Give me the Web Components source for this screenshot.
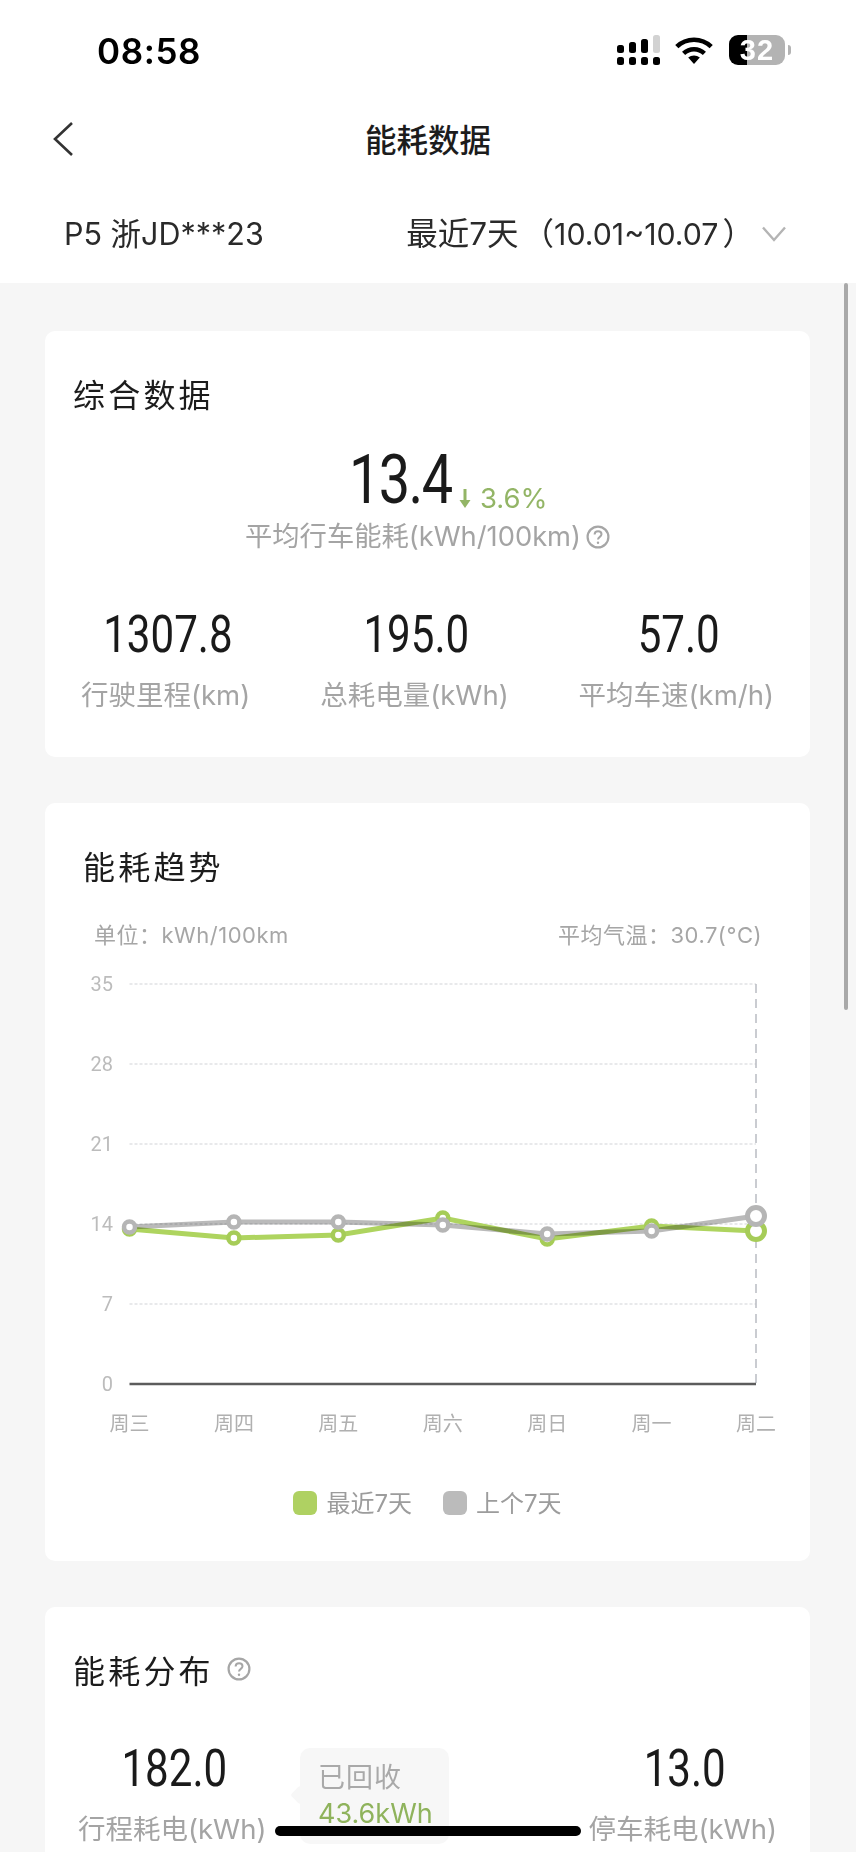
<!DOCTYPE html>
<html lang="zh-CN">
<head>
<meta charset="utf-8">
<title>能耗数据</title>
<style>
html,body{margin:0;padding:0;background:#f6f6f6}
body{font-family:"Liberation Sans","Noto Sans CJK SC",sans-serif;color:#1c1c1c}
</style>
</head>
<body>
<energy-app></energy-app>

<template id="t-app">
<style>
:host{display:block;position:relative;width:856px;height:1852px;overflow:hidden;background:#f6f6f6}
main{display:flex;flex-direction:column;gap:46px;padding:48px 46px 0 45px}
.scroll{position:absolute;left:844px;top:283px;width:4px;height:727px;background:#a9a9a9;border-radius:2px}
.home{position:absolute;left:275px;top:1826px;width:306px;height:10px;background:#000;border-radius:5px}
</style>
<status-bar></status-bar>
<nav-bar>能耗数据</nav-bar>
<filter-row></filter-row>
<main>
  <data-card heading="综合数据" pad="28" style="height:426px"><summary-panel></summary-panel></data-card>
  <data-card heading="能耗趋势" pad="38" style="height:758px"><trend-chart></trend-chart></data-card>
  <data-card heading="能耗分布" help pad="28" style="height:300px"><distribution-panel></distribution-panel></data-card>
</main>
<div class="scroll"></div>
<div class="home"></div>
</template>

<template id="t-status">
<style>
:host{display:flex;justify-content:space-between;align-items:flex-start;height:100px;background:#fff;box-sizing:border-box;padding:31px 65px 0 97px}
.time{font:600 35px/40px Inter,"Liberation Sans",sans-serif;letter-spacing:.6px;color:#000}
.icons{display:flex;align-items:flex-start;padding-top:4px}
.sig{margin-right:15px}.wifi{margin-right:16px;margin-top:2px}
.bat{position:relative;width:56px;height:30px;border-radius:9px;overflow:hidden;background:linear-gradient(90deg,#000 0 18px,#b3b3b3 18px);text-align:center;font:700 29px/31px "Liberation Sans",sans-serif;color:#fff;letter-spacing:1px;box-sizing:border-box}
.cap{width:3px;height:10px;margin:10px 0 0 3px;background:#b3b3b3;border-radius:0 3px 3px 0}
</style>
<div class="time">08:58</div>
<div class="icons">
<svg class="sig" width="43" height="30" viewBox="0 0 43 30">
  <rect x="0" y="10" width="7" height="8" rx="2.5"/><rect x="12" y="7" width="7" height="11" rx="2.5"/><rect x="24" y="4" width="7" height="14" rx="2.5"/><rect x="36" y="0" width="7" height="18" rx="2.5" fill="#d2d2d2"/>
  <rect x="0" y="22" width="7" height="8" rx="2.5"/><rect x="12" y="22" width="7" height="8" rx="2.5"/><rect x="24" y="22" width="7" height="8" rx="2.5"/><rect x="36" y="22" width="7" height="8" rx="2.5"/>
</svg>
<svg class="wifi" width="38" height="27" viewBox="0 0 38 27" fill="none" stroke="#000" stroke-width="4.6">
  <path d="M1.8 9.6C11.5 .4 26.5 .4 36.2 9.6"/><path d="M8.6 16.4C14.5 10.9 23.5 10.9 29.4 16.4"/><path d="M13.2 20.6C16.6 17.8 21.4 17.8 24.8 20.6L19 27Z" fill="#000" stroke="none"/>
</svg>
<div class="bat">32</div><div class="cap"></div>
</div>
</template>

<template id="t-nav">
<style>
:host{display:flex;align-items:center;justify-content:center;position:relative;height:78px;background:#fff}
.t{font:500 31.5px/40px "Noto Sans CJK SC",sans-serif;color:#1c1c1c;margin-top:-2px}
svg{position:absolute;left:52px;top:21px}
</style>
<svg width="22" height="36" viewBox="0 0 22 36" fill="none" stroke="#333" stroke-width="2.6"><path d="M20 2 3 18 20 34"/></svg>
<div class="t"><slot></slot></div>
</template>

<template id="t-filter">
<style>
:host{display:flex;align-items:center;justify-content:space-between;height:105px;background:#fff;box-sizing:border-box;padding:6px 70px 0 64px;font:400 30.500px/40px Inter,"Noto Sans CJK SC",sans-serif;color:#2a2a2a}
.r{display:flex;align-items:center;font-size:31.5px;white-space:pre}
.n{font-size:30.3px;margin-right:4px}
.o{margin-left:4px}
.c{margin-left:8px}
</style>
<div>P5 浙JD***23</div>
<div class="r"><span>最近7天<span class="o">（</span><span class="n">10.01~10.07</span>）</span><svg class="c" width="24" height="16" viewBox="0 0 24 16" fill="none" stroke="#b4b4b4" stroke-width="2.4"><path d="M1 1.500 12 14 23 1.500"/></svg></div>
</template>

<template id="t-card">
<style>
:host{display:block;background:#fff;border-radius:10px;box-sizing:border-box;overflow:visible}
.h{display:flex;align-items:center;padding-top:42px;font:400 32px/40px "Noto Sans CJK SC",sans-serif;letter-spacing:3.2px;color:#1c1c1c}
</style>
<div class="h" id="h"><span id="title"></span></div>
<slot></slot>
</template>

<template id="t-help">
<style>
:host{display:inline-flex;vertical-align:middle}
</style>
<svg width="24" height="24" viewBox="0 0 24 24" fill="none" stroke="#a6a6a6" stroke-width="2.2"><circle cx="12" cy="12" r="10.4"/><path d="M8.6 9.6c0-2 1.500-3.300 3.500-3.300s3.400 1.300 3.400 3c0 2.600-3.500 2.500-3.500 5.300" stroke-width="2"/><circle cx="12" cy="17.800" r="1.200" fill="#a6a6a6" stroke="none"/></svg>
</template>

<template id="t-num">
<style>
:host{display:inline-block;font-family:Roboto,sans-serif;font-weight:400;color:#1a1a1a;white-space:nowrap}
span{display:inline-block;transform:scaleX(var(--sx,.81));transform-origin:center}
</style>
<span><slot></slot></span>
</template>

<template id="t-stat">
<style>
:host{display:flex;flex-direction:column;align-items:center}
big-num{font-size:52px;line-height:50px;margin-left:4px}
.l{margin-top:17px;font:400 27.500px/36px Inter,"Noto Sans CJK SC",sans-serif;color:#a4a4a4;white-space:nowrap}
</style>
<big-num id="n"></big-num>
<div class="l"><slot></slot></div>
</template>

<template id="t-summary">
<style>
:host{display:block}
.top{display:flex;flex-direction:column;align-items:center;padding-top:32px}
.v{display:flex;align-items:flex-end;height:70px;margin-left:42px}
big-num{font-size:69px;line-height:70px;letter-spacing:-2px;--sx:.81;margin:0 -12px 0 -12px}
.d{display:flex;align-items:center;margin:0 0 3px 7px;font:400 27.500px/28px Inter,sans-serif;color:#93b566}
.d svg{margin-right:9px}
.lab{display:flex;align-items:center;gap:5px;margin-top:3px;font:400 27.300px/38px Inter,"Noto Sans CJK SC",sans-serif;color:#a4a4a4;white-space:nowrap}
.row{display:flex;justify-content:space-between;padding:0 36px;margin-top:54px}
</style>
<div class="top">
  <div class="v"><big-num>13.4</big-num><div class="d"><svg width="12" height="19" viewBox="0 0 11 19" fill="#93b566"><path d="M4 0h3v11h4l-5.500 8L0 11h4z"/></svg>3.6%</div></div>
  <div class="lab">平均行车能耗(kWh/100km)<help-icon></help-icon></div>
</div>
<div class="row">
  <stat-item value="1307.8">行驶里程(km)</stat-item>
  <stat-item value="195.0">总耗电量(kWh)</stat-item>
  <stat-item value="57.0">平均车速(km/h)</stat-item>
</div>
</template>

<template id="t-trend">
<style>
:host{display:block}
.u{display:flex;justify-content:space-between;padding:0 48px 0 49px;margin-top:34px;font:400 22px/32px Inter,"Noto Sans CJK SC",sans-serif;color:#a6a6a6;letter-spacing:.5px}
svg.c{display:block;margin-top:19.500px}
svg text{font-family:Roboto,"Noto Sans CJK SC",sans-serif}
.lg{display:flex;justify-content:center;gap:31px;margin-top:40px}
.it{display:flex;align-items:center;gap:9px;font:400 24px/25px Inter,"Noto Sans CJK SC",sans-serif;color:#9c9c9c}
.sw{width:24px;height:24px;border-radius:6px}
</style>
<div class="u"><span>单位：kWh/100km</span><span>平均气温：30.7(°C)</span></div>
<svg class="c" id="c" width="765" height="480" viewBox="45 970 765 480"></svg>
<div class="lg">
  <div class="it"><span class="sw" style="background:#afd162"></span>最近7天</div>
  <div class="it"><span class="sw" style="background:#bbb"></span>上个7天</div>
</div>
</template>

<template id="t-dist">
<style>
:host{display:block;position:relative}
.row{display:flex;justify-content:space-between;padding:0 33px;margin-top:55px}
.tip{position:absolute;left:255px;top:4px;width:149px;height:96px;box-sizing:border-box;padding:11px 0 0 18px;background:#f7f7f7;border-radius:10px}
.tip:before{content:"";position:absolute;left:-7px;top:40px;width:14px;height:14px;background:#f7f7f7;transform:rotate(45deg);border-radius:3px}
.a{position:relative;font:400 27px/34px "Noto Sans CJK SC",sans-serif;color:#a9a9a9;letter-spacing:1px}
.b{position:relative;margin-top:4px;font:400 27px/34px Inter,sans-serif;color:#8fb35c}
</style>
<div class="row">
  <stat-item value="182.0">行程耗电(kWh)</stat-item>
  <stat-item value="13.0">停车耗电(kWh)</stat-item>
</div>
<div class="tip"><div class="a">已回收</div><div class="b">43.6kWh</div></div>
</template>

<script>
function tpl(id){return document.getElementById(id).content.cloneNode(true)}
class Base extends HTMLElement{
  constructor(){super();this.attachShadow({mode:"open"}).appendChild(tpl(this.constructor.tid));}
}
class EnergyApp extends Base{static tid="t-app"}
class StatusBar extends Base{static tid="t-status"}
class NavBar extends Base{static tid="t-nav"}
class FilterRow extends Base{static tid="t-filter"}
class HelpIcon extends Base{static tid="t-help"}
class BigNum extends Base{static tid="t-num"}
class SummaryPanel extends Base{static tid="t-summary"}
class DistributionPanel extends Base{static tid="t-dist"}
class DataCard extends Base{
  static tid="t-card";
  connectedCallback(){
    const s=this.shadowRoot;
    s.getElementById("title").textContent=this.getAttribute("heading");
    s.getElementById("h").style.paddingLeft=(+this.getAttribute("pad")||30)+"px";
    if(this.hasAttribute("help")){
      const i=document.createElement("help-icon");
      i.style.marginLeft="13px";
      s.getElementById("h").appendChild(i);
    }
  }
}
class StatItem extends Base{
  static tid="t-stat";
  connectedCallback(){this.shadowRoot.getElementById("n").textContent=this.getAttribute("value");}
}
class TrendChart extends Base{
  static tid="t-trend";
  connectedCallback(){
    const x0=129.5,x1=756,dx=(x1-x0)/6,y=v=>1383-v*80/7;
    const green=[1228,1237,1234,1217,1238,1225,1230],gray=[1226,1221,1221,1224,1233,1230,1215];
    const days=["周三","周四","周五","周六","周日","周一","周二"];
    let h="";
    [35,28,21,14,7,0].forEach(v=>{
      const yy=y(v);
      if(v) h+=`<line x1="${x0}" x2="${x1}" y1="${yy}" y2="${yy}" stroke="#d2d4d8" stroke-width="1.2" stroke-dasharray="3 2"/>`;
      h+=`<text x="113" y="${yy+7}" text-anchor="end" font-size="20" fill="#bcbcbc">${v}</text>`;
    });
    h+=`<line x1="${x1}" x2="${x1}" y1="983" y2="1383" stroke="#b9bcc2" stroke-width="1.5" stroke-dasharray="9 6"/>`;
    h+=`<line x1="${x0}" x2="${x1}" y1="1383" y2="1383" stroke="#5c5c5c" stroke-width="2.4"/>`;
    const pts=a=>a.map((v,i)=>`${(x0+i*dx).toFixed(1)},${v}`).join(" ");
    h+=`<polyline points="${pts(green)}" fill="none" stroke="#aed45f" stroke-width="5"/>`;
    h+=`<polyline points="${pts(gray)}" fill="none" stroke="#bababa" stroke-width="5" style="mix-blend-mode:multiply"/>`;
    const dots=(a,c)=>a.map((v,i)=>{
      const last=i==6;
      return `<circle cx="${(x0+i*dx).toFixed(1)}" cy="${v}" r="${last?8.5:5.5}" fill="#fff" stroke="${c}" stroke-width="${last?5:4.500}"/>`;
    }).join("");
    h+=dots(green,"#a6cc58")+dots(gray,"#b5b5b5");
    days.forEach((d,i)=>{h+=`<text x="${(x0+i*dx).toFixed(1)}" y="1430" text-anchor="middle" font-size="20" fill="#b0b0b0">${d}</text>`;});
    this.shadowRoot.getElementById("c").innerHTML=h;
  }
}
customElements.define("help-icon",HelpIcon);
customElements.define("big-num",BigNum);
customElements.define("stat-item",StatItem);
customElements.define("status-bar",StatusBar);
customElements.define("nav-bar",NavBar);
customElements.define("filter-row",FilterRow);
customElements.define("data-card",DataCard);
customElements.define("summary-panel",SummaryPanel);
customElements.define("trend-chart",TrendChart);
customElements.define("distribution-panel",DistributionPanel);
customElements.define("energy-app",EnergyApp);
</script>
</body>
</html>
